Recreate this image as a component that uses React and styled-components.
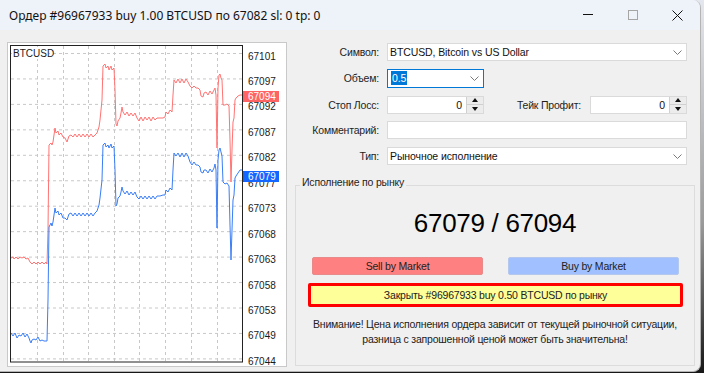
import React from 'react'
import styled, { createGlobalStyle } from 'styled-components'

const GlobalStyle = createGlobalStyle`
  html, body {
    margin: 0;
    padding: 0;
  }
  body {
    width: 704px;
    height: 373px;
    overflow: hidden;
    background: linear-gradient(#e4e7ee 0%, #9a9a9a 60%, #161616 100%);
    font-family: "Liberation Sans", Arial, sans-serif;
    color: #1a1a1a;
  }
`

const Window = styled.div`
  width: 700px;
  height: 371px;
  background: #f0f0f0;
  border-right: 1px solid #b4b4b4;
  border-bottom: 1px solid #b4b4b4;
  border-radius: 0 8px 8px 0;
  overflow: hidden;
  display: flex;
  flex-direction: column;
`

// Title bar

const TitleBar = styled.div`
  height: 30px;
  flex: none;
  display: flex;
  align-items: center;
  background: #eef2f9;
`

const Title = styled.div`
  flex: 1;
  padding-left: 9px;
  font-family: "Noto Sans", "Liberation Sans", sans-serif;
  font-size: 12px;
  color: #111;
  white-space: nowrap;
`

const Caption = styled.div`
  width: 45px;
  height: 30px;
  display: flex;
  align-items: center;
  justify-content: center;
`

// Body

const Body = styled.div`
  flex: 1;
  display: flex;
  gap: 8px;
  padding: 12px 7px 0 7px;
`

const ChartFrame = styled.div`
  width: 278px;
  height: 323px;
  flex: none;
  background: #fff;
  border: 1px solid #c9c9c9;
  display: flex;
`

const Side = styled.div`
  flex: 1;
  display: flex;
  flex-direction: column;
  padding-top: 1px;
`

const Form = styled.div`
  display: flex;
  flex-direction: column;
  gap: 7.75px;
  padding-right: 8px;
`

const Row = styled.div`
  display: flex;
  align-items: center;
  height: ${({ $h }) => $h || 18}px;
`

const Label = styled.div`
  width: ${({ $w }) => $w || 84}px;
  flex: none;
  text-align: right;
  font-size: 10.5px;
  letter-spacing: -0.2px;
  color: #1e1e1e;
  margin-right: ${({ $gap }) => $gap || 8}px;
  white-space: nowrap;
`

const Field = styled.div`
  height: 100%;
  box-sizing: border-box;
  flex: ${({ $w }) => ($w ? 'none' : 1)};
  width: ${({ $w }) => ($w ? `${$w}px` : 'auto')};
  background: #fff;
  border: 1px solid ${({ $focus }) => ($focus ? '#0078d7' : '#dadada')};
  display: flex;
  align-items: center;
  font-size: 10.5px;
  letter-spacing: -0.1px;
  color: #111;
  padding-left: ${({ $focus }) => ($focus ? 3 : 2)}px;
`

const FieldText = styled.span`
  flex: 1;
  white-space: nowrap;
  text-align: ${({ $right }) => ($right ? 'right' : 'left')};
  padding-right: ${({ $right }) => ($right ? 4 : 0)}px;
`

const Selected = styled.span`
  background: #0078d7;
  color: #fff;
  padding: 1px 1px;
`

const Chevron = styled.svg`
  width: 9px;
  height: 5px;
  margin-right: 4px;
  flex: none;
`

const Spinner = styled.div`
  width: 17px;
  height: 100%;
  flex: none;
  display: flex;
  flex-direction: column;
  box-sizing: border-box;
  border-left: 1px solid #d0d0d0;
`

const SpinBtn = styled.div`
  flex: 1;
  display: flex;
  align-items: center;
  justify-content: center;
  background: #ececec;
  border-top: ${({ $low }) => ($low ? '1px solid #d0d0d0' : 'none')};
`

// Group box

const Group = styled.div`
  position: relative;
  margin-top: 20px;
  height: 181px;
  box-sizing: border-box;
  border: 1px solid #dcdcdc;
  display: flex;
  flex-direction: column;
  align-items: center;
`

const Legend = styled.div`
  position: absolute;
  left: 4px;
  top: -10px;
  padding: 0 2px;
  background: #f0f0f0;
  font-size: 10.5px;
  letter-spacing: -0.2px;
  color: #1e1e1e;
`

const Prices = styled.div`
  margin-top: 22px;
  height: 30px;
  line-height: 30px;
  font-size: 26px;
  color: #000;
  letter-spacing: -0.3px;
`

const Buttons = styled.div`
  align-self: stretch;
  display: flex;
  justify-content: space-between;
  margin: 19px 15px 0 16px;
`

const TradeButton = styled.div`
  width: 171px;
  height: 18px;
  box-sizing: border-box;
  border: 1px solid ${({ $kind }) => ($kind === 'sell' ? '#e98a8a' : '#b4c8ee')};
  border-radius: 2px;
  background: ${({ $kind }) => ($kind === 'sell' ? '#ff8080' : '#a0c0ff')};
  display: flex;
  align-items: center;
  justify-content: center;
  font-size: 10.5px;
  letter-spacing: -0.2px;
  color: #222;
`

const CloseButton = styled.div`
  align-self: stretch;
  margin: 8px 11px 0 12px;
  height: 24px;
  box-sizing: border-box;
  border: 3px solid #ff0000;
  border-radius: 2px;
  background: #ffff99;
  display: flex;
  align-items: center;
  justify-content: center;
  font-size: 10.5px;
  letter-spacing: -0.2px;
  color: #222;
`

const Warning = styled.div`
  margin-top: 10px;
  text-align: center;
  font-size: 10.5px;
  letter-spacing: -0.2px;
  line-height: 15px;
  color: #222;
`

// Chart data

const redPts = [
  [11,258],[13,257],[14,259],[16,257],[18,259],[20,257],[22,258],[24,257],[26,259],[28,258],[30,262],[32,264],[34,262],[36,264],[38,262],[40,264],[42,262],[44,264],[46,262],[47,264],[48,230],[49,145],[51,143],[52,145],[53,142],[55,128],[56,133],[58,131],[59,135],[61,133],[63,137],[65,138],[67,142],[69,136],[71,135],[73,137],[75,134],[77,137],[79,134],[81,137],[83,134],[85,137],[87,134],[89,137],[91,134],[93,137],[95,135],[97,133],[99,127],[100,120],[102,100],[103,66],[105,64],[106,68],[108,66],[109,70],[111,66],[112,70],[114,68],[115,90],[116,124],[117,126],[118,121],[120,118],[121,113],[122,107],[123,112],[125,115],[127,112],[129,116],[131,113],[133,116],[135,113],[137,118],[139,121],[141,117],[143,121],[145,117],[147,120],[149,117],[151,121],[153,117],[155,120],[157,118],[160,118],[163,118],[165,117],[166,112],[168,114],[170,110],[172,112],[173,95],[174,80],[176,83],[178,79],[180,83],[182,79],[184,83],[186,79],[188,82],[190,86],[192,88],[194,86],[196,88],[198,88],[200,90],[201,96],[203,97],[204,93],[206,92],[208,95],[210,91],[212,94],[214,90],[215,88],[216,95],[217,148],[218,88],[219,75],[220,74],[221,78],[222,80],[223,105],[225,105],[227,104],[229,106],[230,140],[231,182],[232,150],[233,122],[234,118],[235,100],[236,98],[238,96],[240,95],[242,95]
]

const bluePts = [
  [11,333],[13,336],[15,333],[17,338],[19,335],[21,336],[23,333],[25,337],[27,334],[29,338],[30,341],[31,343],[32,340],[34,339],[36,340],[38,337],[40,341],[42,340],[44,341],[46,341],[47,341],[48,300],[49,227],[51,223],[52,226],[53,222],[55,208],[56,213],[58,211],[59,215],[61,213],[63,218],[65,218],[67,220],[69,214],[71,213],[73,216],[75,213],[77,216],[79,213],[81,216],[83,213],[85,216],[87,213],[89,216],[91,213],[93,216],[95,213],[97,211],[99,205],[100,198],[102,180],[103,145],[105,143],[106,147],[108,145],[109,148],[111,144],[112,148],[114,146],[115,170],[116,206],[117,204],[118,198],[120,196],[121,192],[122,187],[123,191],[125,194],[127,191],[129,195],[131,192],[133,195],[135,192],[137,197],[139,199],[141,196],[143,199],[145,196],[147,199],[149,196],[151,199],[153,196],[155,199],[157,196],[160,196],[163,195],[165,195],[166,190],[168,192],[170,188],[172,190],[173,170],[174,153],[176,156],[178,153],[180,157],[182,153],[184,157],[186,153],[188,156],[190,162],[192,165],[194,162],[196,165],[198,165],[200,167],[201,172],[203,173],[204,170],[206,170],[208,173],[210,169],[212,172],[214,168],[215,164],[216,170],[217,228],[218,160],[219,150],[220,148],[221,152],[222,156],[223,182],[225,184],[227,183],[229,186],[230,225],[231,260],[232,230],[233,200],[234,195],[235,178],[236,176],[238,173],[240,170],[242,170]
]

const levels = ['67101','67097','67092','67087','67082','67077','67073','67068','67063','67058','67053','67049','67044']
const gridX = [37, 63, 88, 114, 139, 165, 191, 217]
const STEP = 25.45

function Chart() {
  const toStr = pts => pts.map(p => p.join(',')).join(' ')
  return (
    <svg width="278" height="323" viewBox="8 43 278 323" style={{ display: 'block' }}>
      {levels.map((_, i) => (
        <line key={'h' + i} x1="11" x2="242" y1={53.5 + i * STEP} y2={53.5 + i * STEP}
          stroke="#c8c8c8" strokeDasharray="3 3" />
      ))}
      {gridX.map(x => (
        <line key={'v' + x} x1={x + 0.5} x2={x + 0.5} y1="46" y2="362" stroke="#c8c8c8" strokeDasharray="3 3" />
      ))}
      <rect x="12" y="47" width="37" height="12" fill="#fff" />
      <text x="13" y="56.5" fontSize="10" fontFamily="Liberation Sans, Arial, sans-serif" fill="#1a1a1a">BTCUSD</text>
      <polyline points={toStr(redPts)} fill="none" stroke="#ff7373" strokeWidth="1" />
      <polyline points={toStr(bluePts)} fill="none" stroke="#3a7ef5" strokeWidth="1" />
      <rect x="10.5" y="45.5" width="232" height="316.5" fill="none" stroke="#222" strokeWidth="1" />
      {levels.map((v, i) => (
        <text key={v} x="248" y={59.5 + i * STEP} fontSize="10" fontFamily="Liberation Sans, Arial, sans-serif" fill="#1a1a1a">{v}</text>
      ))}
      <rect x="243" y="91" width="36" height="11" fill="#ff6464" />
      <text x="248" y="100" fontSize="10" fontFamily="Liberation Sans, Arial, sans-serif" fill="#fff">67094</text>
      <rect x="243" y="171" width="36" height="11" fill="#1565ff" />
      <text x="248" y="180" fontSize="10" fontFamily="Liberation Sans, Arial, sans-serif" fill="#fff">67079</text>
    </svg>
  )
}

function Chev() {
  return (
    <Chevron viewBox="0 0 9 5">
      <path d="M0.5 0.5 L4.5 4.5 L8.5 0.5" fill="none" stroke="#7a7a7a" strokeWidth="1" />
    </Chevron>
  )
}

function Spin() {
  return (
    <Spinner>
      <SpinBtn>
        <svg width="6" height="4" viewBox="0 0 6 4"><polygon points="3,0 6,4 0,4" fill="#111" /></svg>
      </SpinBtn>
      <SpinBtn $low>
        <svg width="6" height="4" viewBox="0 0 6 4"><polygon points="0,0 6,0 3,4" fill="#111" /></svg>
      </SpinBtn>
    </Spinner>
  )
}

export default function App() {
  return (
    <>
      <GlobalStyle />
      <Window>
        <TitleBar>
          <Title>Ордер #96967933 buy 1.00 BTCUSD по 67082 sl: 0 tp: 0</Title>
          <Caption>
            <svg width="10" height="2" viewBox="0 0 10 2"><rect x="0" y="0" width="10" height="1" fill="#111" /></svg>
          </Caption>
          <Caption>
            <svg width="10" height="10" viewBox="0 0 10 10"><rect x="0.5" y="0.5" width="9" height="9" fill="none" stroke="#a5a5a5" /></svg>
          </Caption>
          <Caption>
            <svg width="11" height="11" viewBox="0 0 11 11"><path d="M0.5 0.5 L10.5 10.5 M10.5 0.5 L0.5 10.5" stroke="#111" strokeWidth="1" /></svg>
          </Caption>
        </TitleBar>

        <Body>
          <ChartFrame>
            <Chart />
          </ChartFrame>

          <Side>
            <Form>
              <Row>
                <Label>Символ:</Label>
                <Field>
                  <FieldText>BTCUSD, Bitcoin vs US Dollar</FieldText>
                  <Chev />
                </Field>
              </Row>
              <Row $h={19}>
                <Label>Объем:</Label>
                <Field $w={97} $focus>
                  <FieldText><Selected>0.5</Selected></FieldText>
                  <Chev />
                </Field>
              </Row>
              <Row>
                <Label>Стоп Лосс:</Label>
                <Field $w={97}>
                  <FieldText $right>0</FieldText>
                  <Spin />
                </Field>
                <Label $w={97} $gap={9}>Тейк Профит:</Label>
                <Field $w={97}>
                  <FieldText $right>0</FieldText>
                  <Spin />
                </Field>
              </Row>
              <Row>
                <Label>Комментарий:</Label>
                <Field />
              </Row>
              <Row>
                <Label>Тип:</Label>
                <Field>
                  <FieldText>Рыночное исполнение</FieldText>
                  <Chev />
                </Field>
              </Row>
            </Form>

            <Group>
              <Legend>Исполнение по рынку</Legend>
              <Prices>67079 / 67094</Prices>
              <Buttons>
                <TradeButton $kind="sell">Sell by Market</TradeButton>
                <TradeButton $kind="buy">Buy by Market</TradeButton>
              </Buttons>
              <CloseButton>Закрыть #96967933 buy 0.50 BTCUSD по рынку</CloseButton>
              <Warning>
                Внимание! Цена исполнения ордера зависит от текущей рыночной ситуации,<br />
                разница с запрошенной ценой может быть значительна!
              </Warning>
            </Group>
          </Side>
        </Body>
      </Window>
    </>
  )
}
